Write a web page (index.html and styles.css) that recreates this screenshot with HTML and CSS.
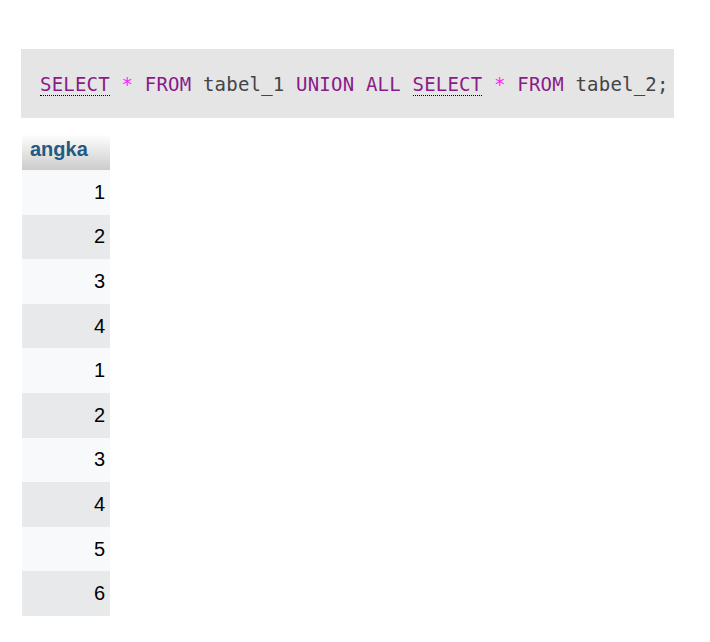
FILE: index.html
```html
<!DOCTYPE html>
<html>
<head>
<meta charset="utf-8">
<link rel="stylesheet" href="styles.css">
</head>
<body>
<div class="sql">
  <code><abbr class="kw">SELECT</abbr> <span class="op">*</span> <span class="kw">FROM</span> <span class="id">tabel_1</span> <span class="kw">UNION ALL</span> <abbr class="kw">SELECT</abbr> <span class="op">*</span> <span class="kw">FROM</span> <span class="id">tabel_2</span><span class="id">;</span></code>
</div>
<table class="result">
  <thead><tr><th>angka</th></tr></thead>
  <tbody>
    <tr><td>1</td></tr>
    <tr><td>2</td></tr>
    <tr><td>3</td></tr>
    <tr><td>4</td></tr>
    <tr><td>1</td></tr>
    <tr><td>2</td></tr>
    <tr><td>3</td></tr>
    <tr><td>4</td></tr>
    <tr><td>5</td></tr>
    <tr><td>6</td></tr>
  </tbody>
</table>
</body>
</html>
```
FILE: styles.css
```css
html, body {
  margin: 0;
  padding: 0;
  background: #ffffff;
}
body {
  padding-top: 49px;
  font-family: "Liberation Sans", Arial, sans-serif;
}
.sql {
  margin-left: 21px;
  width: 653px;
  height: 69px;
  background: #e5e5e5;
  box-sizing: border-box;
  padding-left: 19px;
  display: flex;
  align-items: center;
}
.sql code {
  font-family: "DejaVu Sans Mono", monospace;
  font-size: 19px;
  letter-spacing: 0.2px;
  color: #444444;
  white-space: pre;
  line-height: 24px;
  padding-top: 0;
}
.kw {
  color: #8b1a8b;
}
abbr.kw {
  text-decoration: none;
  border-bottom: 1px dotted #000000;
}
.op {
  color: #ff22ff;
}
.id {
  color: #444444;
}
.result {
  margin-top: 16px;
  margin-left: 22px;
  border-collapse: collapse;
  border-spacing: 0;
}
.result th {
  width: 88px;
  box-sizing: border-box;
  height: 36px;
  padding: 0 0 6px 8px;
  text-align: left;
  font-size: 20px;
  font-weight: bold;
  color: #235a81;
  background: linear-gradient(#ffffff, #cccccc);
}
.result td {
  height: 44.6px;
  padding: 0 5px 0 0;
  text-align: right;
  font-size: 20px;
  color: #000000;
}
.result tbody tr:nth-child(odd) td {
  background: #f7f9fa;
}
.result tbody tr:nth-child(even) td {
  background: #e8e9ea;
}
```
